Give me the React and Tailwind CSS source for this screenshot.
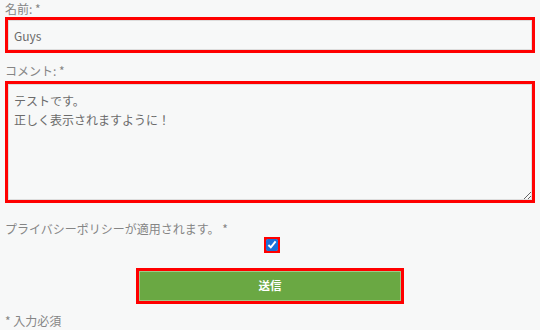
import React from "react";

const font = { fontFamily: '"Noto Sans CJK JP", "Noto Sans", sans-serif' };

const App = () => {
  return (
    <div
      className="w-[540px] h-[330px] bg-[#f7f8f8] text-[#858585] text-[12px] px-[5px] overflow-hidden"
      style={font}
    >
      <label className="block leading-[16px] pt-[1px]">名前: *</label>
      <input
        type="text"
        defaultValue="Guys"
        className="block w-full h-[36px] border-[3px] border-[#ff0000] bg-[#f7f8f8] shadow-[inset_0_0_0_1px_#dddddd] px-[6px] text-[12px] text-[#6b6b6b] outline-none"
        style={font}
      />
      <label className="block leading-[16px] mt-[10px]">コメント: *</label>
      <textarea
        defaultValue={"テストです。\n正しく表示されますように！"}
        className="block w-full h-[122px] mt-[2px] border-[3px] border-[#ff0000] bg-[#f7f8f8] shadow-[inset_0_0_0_1px_#dddddd] px-[6px] py-[7px] text-[12px] leading-[19px] text-[#6b6b6b] outline-none resize-y"
        style={font}
      />
      <p className="leading-[16px] mt-[18px]">プライバシーポリシーが適用されます。 *</p>
      <div className="flex justify-center pl-[4px]">
        <span className="inline-flex bg-[#ff0000] p-[2px]">
          <input
            type="checkbox"
            defaultChecked
            className="m-0 w-[12px] h-[12px] block accent-[#1a6fd8]"
          />
        </span>
      </div>
      <div className="flex justify-center mt-[15px]">
        <button className="w-[268px] h-[36px] border-[3px] border-[#ff0000] bg-[#6aa843] shadow-[inset_0_0_0_1px_#9fc98a] text-white text-[11.5px] font-bold">
          送信
        </button>
      </div>
      <p className="leading-[15px] mt-[9px]">* 入力必須</p>
    </div>
  );
};

export default App;
